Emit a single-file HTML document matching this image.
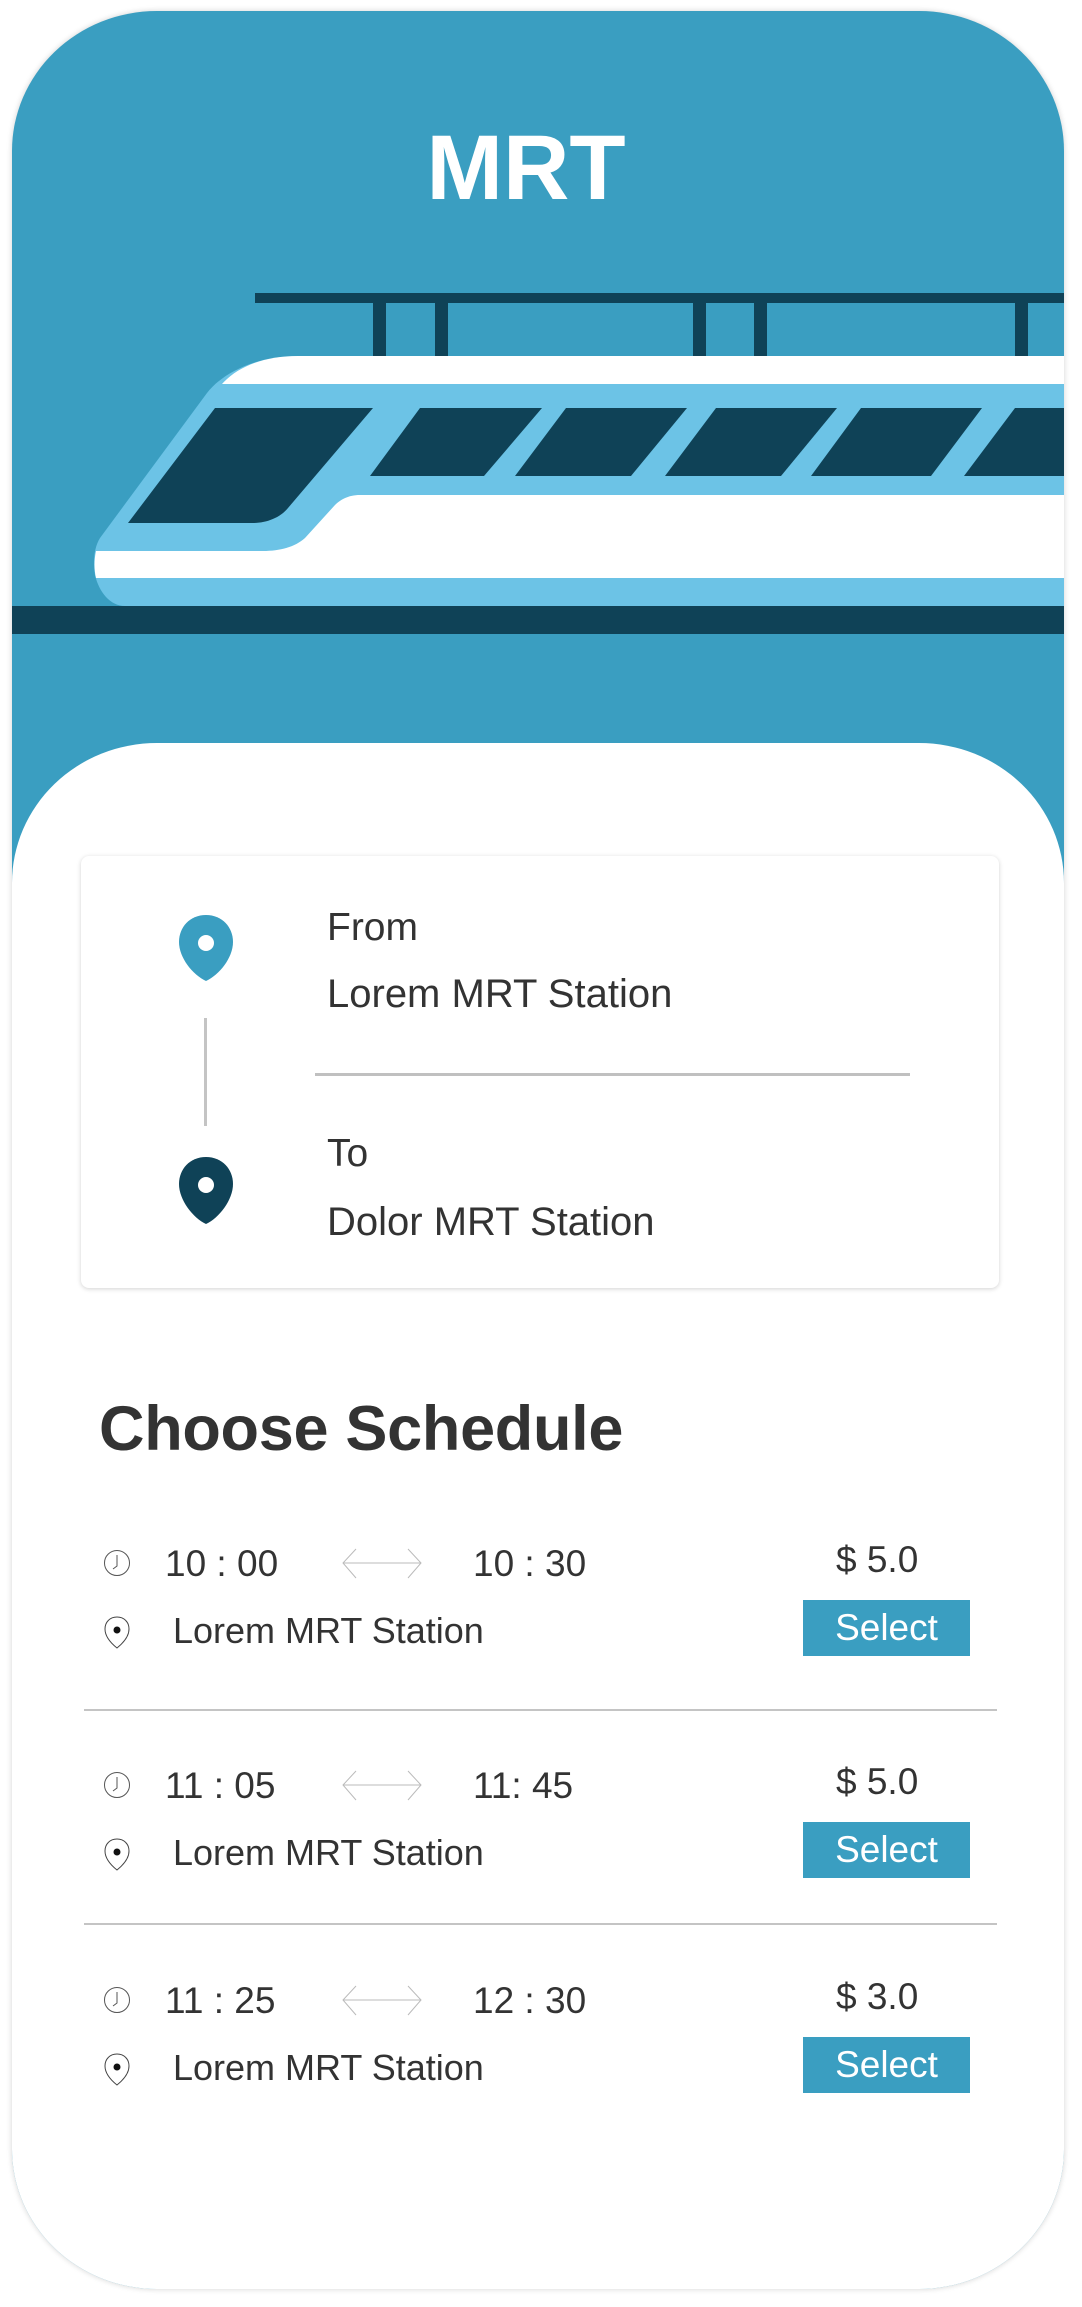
<!DOCTYPE html>
<html><head><meta charset="utf-8"><style>
html,body{margin:0;padding:0;background:#fff;}
body{width:1082px;height:2307px;position:relative;overflow:hidden;font-family:"Liberation Sans",sans-serif;color:#333;}
.frame{position:absolute;left:12px;top:11px;width:1052px;height:2278px;border-radius:145px/140px;overflow:hidden;background:#3a9ec1;box-shadow:0 0 6px rgba(0,0,0,.18);}
.panel{position:absolute;left:0;top:732px;width:1052px;height:1600px;background:#fff;border-radius:145px/140px;}
.t{position:absolute;line-height:1;white-space:nowrap;}
.card{position:absolute;left:81px;top:856px;width:918px;height:432px;background:#fff;border-radius:8px;box-shadow:0 1px 5px rgba(0,0,0,.18);}
.btn{position:absolute;left:803px;width:167px;height:56px;background:#3a9ec1;color:#fff;font-size:37px;line-height:56px;text-align:center;}
.sep{position:absolute;left:84px;width:913px;height:2px;background:#c4c4c4;}
</style></head><body>
<div class="frame">
<svg width="1069" height="760" style="position:absolute;left:-12px;top:-11px" viewBox="0 0 1069 760">
<rect x="255" y="293" width="814" height="10" fill="#0f4257"/>
<g fill="#0f4257">
<rect x="373" y="298" width="13" height="60"/><rect x="435" y="298" width="13" height="60"/>
<rect x="693" y="298" width="13" height="60"/><rect x="754" y="298" width="13" height="60"/>
<rect x="1015" y="298" width="13" height="60"/>
</g>
<path d="M1069,356 L298,356 C260,356 225,370 207,393 L100,538 C94,548 93,560 95,575 C99,592 110,606 125,606 L1069,606 Z" fill="#6cc3e6"/>
<path d="M1069,356 L298,356 C265,356 238,366 222,384 L1069,384 Z" fill="#fff"/>
<path d="M1069,495 L360,495 C348,495 340,500 335,505 L305,538 C295,547 280,551 263,551 L96,551 C94,560 94,570 96,578 L1069,578 Z" fill="#fff"/>
<rect x="12" y="606" width="1057" height="28" fill="#0f4257"/>
<g fill="#0f4257">
<path d="M215,408 L373,408 L288,508 C280,518 266,523 253,523 L128,523 Z"/>
<path d="M420,408 L542,408 L484,476 L370,476 Z"/>
<path d="M566,408 L687,408 L631,476 L515,476 Z"/>
<path d="M716,408 L837,408 L781,476 L665,476 Z"/>
<path d="M861,408 L982,408 L931,476 L811,476 Z"/>
<path d="M1015,408 L1069,408 L1069,476 L964,476 Z"/>
</g>
</svg>
<div class="panel"></div>
</div>
<div class="t" style="left:0;width:1052px;text-align:center;top:122px;font-size:92px;font-weight:bold;color:#fff;">MRT</div>

<div class="card"></div>
<svg width="1082" height="2307" style="position:absolute;left:0;top:0">
<path d="M206,915 C190,915 179,927 179,942 C179,958 193,975 206,981 C219,975 233,958 233,942 C233,927 222,915 206,915 Z" fill="#3a9ec1"/>
<circle cx="206" cy="943" r="8" fill="#fff"/>
<rect x="204" y="1018" width="3" height="108" fill="#c4c4c4"/>
<path d="M206,1157 C190,1157 179,1169 179,1184 C179,1200 193,1218 206,1224 C219,1218 233,1200 233,1184 C233,1169 222,1157 206,1157 Z" fill="#0f4257"/>
<circle cx="206" cy="1185" r="8" fill="#fff"/>
<rect x="315" y="1073" width="595" height="3" fill="#c0c0c0"/>
<g id="r1">
<circle cx="117" cy="1563" r="12.5" fill="none" stroke="#555" stroke-width="1"/>
<path d="M117,1555 L117,1566 L113,1569" fill="none" stroke="#555" stroke-width="1"/>
<path d="M343,1563 L421,1563 M356,1549 L343,1563 L356,1578 M408,1549 L421,1563 L408,1578" fill="none" stroke="#bbb" stroke-width="1"/>
<path d="M117,1617 C110,1617 105,1622 105,1629 C105,1637 112,1644 117,1648 C122,1644 129,1637 129,1629 C129,1622 124,1617 117,1617 Z" fill="none" stroke="#444" stroke-width="1"/>
<circle cx="117" cy="1630" r="3.5" fill="#111"/>
</g>
<use href="#r1" y="222"/>
<use href="#r1" y="437"/>
</svg>
<div class="t" style="left:327px;top:908px;font-size:39px;">From</div>
<div class="t" style="left:327px;top:974px;font-size:40px;">Lorem MRT Station</div>
<div class="t" style="left:327px;top:1134px;font-size:39px;">To</div>
<div class="t" style="left:327px;top:1202px;font-size:40px;">Dolor MRT Station</div>
<div class="t" style="left:99px;top:1398px;font-size:63px;font-weight:bold;letter-spacing:-0.3px;">Choose Schedule</div>

<div class="t" style="left:165px;top:1545px;font-size:37px;">10 : 00</div>
<div class="t" style="left:473px;top:1545px;font-size:37px;">10 : 30</div>
<div class="t" style="left:836px;top:1541px;font-size:37px;">$ 5.0</div>
<div class="t" style="left:173px;top:1613px;font-size:36px;">Lorem MRT Station</div>
<div class="btn" style="top:1600px;">Select</div>
<div class="sep" style="top:1709px;"></div>

<div class="t" style="left:165px;top:1767px;font-size:37px;">11 : 05</div>
<div class="t" style="left:473px;top:1767px;font-size:37px;">11: 45</div>
<div class="t" style="left:836px;top:1763px;font-size:37px;">$ 5.0</div>
<div class="t" style="left:173px;top:1835px;font-size:36px;">Lorem MRT Station</div>
<div class="btn" style="top:1822px;">Select</div>
<div class="sep" style="top:1923px;"></div>

<div class="t" style="left:165px;top:1982px;font-size:37px;">11 : 25</div>
<div class="t" style="left:473px;top:1982px;font-size:37px;">12 : 30</div>
<div class="t" style="left:836px;top:1978px;font-size:37px;">$ 3.0</div>
<div class="t" style="left:173px;top:2050px;font-size:36px;">Lorem MRT Station</div>
<div class="btn" style="top:2037px;">Select</div>
</body></html>
